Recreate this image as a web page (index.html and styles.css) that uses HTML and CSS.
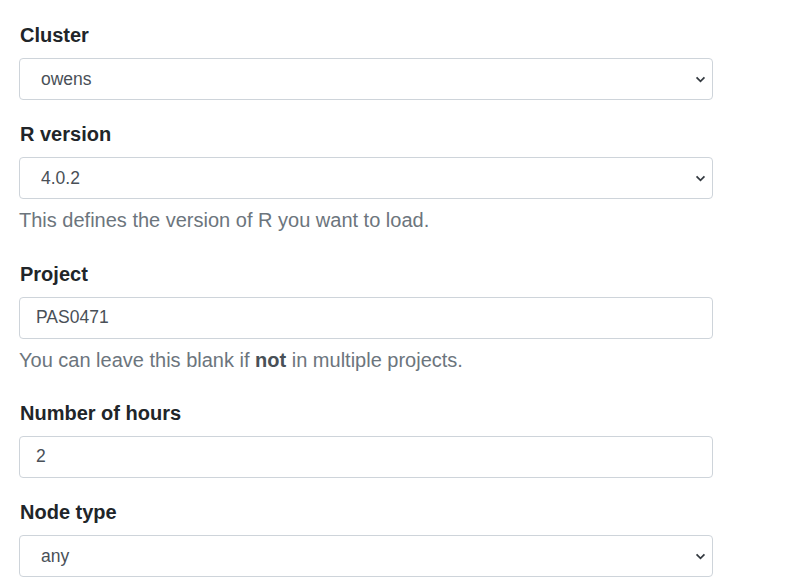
FILE: index.html
```html
<!DOCTYPE html>
<html>
<head>
<meta charset="utf-8">
<link rel="stylesheet" href="styles.css">
</head>
<body>
<form class="form">
  <div class="group">
    <label class="label">Cluster</label>
    <select class="control select"><option>owens</option></select>
  </div>
  <div class="group">
    <label class="label">R version</label>
    <select class="control select"><option>4.0.2</option></select>
    <small class="help">This defines the version of R you want to load.</small>
  </div>
  <div class="group">
    <label class="label">Project</label>
    <input class="control input" type="text" value="PAS0471">
    <small class="help">You can leave this blank if <strong>not</strong> in multiple projects.</small>
  </div>
  <div class="group">
    <label class="label">Number of hours</label>
    <input class="control input" type="text" value="2">
  </div>
  <div class="group">
    <label class="label">Node type</label>
    <select class="control select"><option>any</option></select>
  </div>
</form>
</body>
</html>
```
FILE: styles.css
```css
html, body {
  margin: 0;
  padding: 0;
  background: #fff;
}
body {
  font-family: "Liberation Sans", Arial, sans-serif;
  font-size: 20px;
  line-height: 1.5;
  color: #212529;
}
.form {
  padding: 20px 0 0 19px;
  width: 694px;
}
.group {
  display: flex;
  flex-direction: column;
  margin-bottom: 19.25px;
}
.label {
  font-weight: bold;
  font-size: 20px;
  line-height: 30px;
  margin-bottom: 8px;
  padding-left: 1px;
  color: #212529;
}
.control {
  box-sizing: border-box;
  width: 694px;
  height: 42px;
  margin: 0;
  border: 1px solid #ced4da;
  border-radius: 4px;
  background-color: #fff;
  font-family: "Liberation Sans", Arial, sans-serif;
  font-size: 17.5px;
  color: #495057;
  outline: none;
}
.select {
  appearance: none;
  -webkit-appearance: none;
  padding: 0 30px 0 21px;
  background-image: url("data:image/svg+xml,%3Csvg xmlns='http://www.w3.org/2000/svg' width='12' height='8' viewBox='0 0 12 8'%3E%3Cpath d='M1.5 1.5 6 6l4.5-4.5' fill='none' stroke='%23343a40' stroke-width='2'/%3E%3C/svg%3E");
  background-repeat: no-repeat;
  background-position: right 6px center;
  background-size: 11px 7px;
}
.input {
  padding: 0 16px;
}
.help {
  display: block;
  margin-top: 6px;
  margin-bottom: 4px;
  font-size: 20px;
  line-height: 30px;
  color: #6c757d;
}
.help strong {
  color: #495057;
}
```
